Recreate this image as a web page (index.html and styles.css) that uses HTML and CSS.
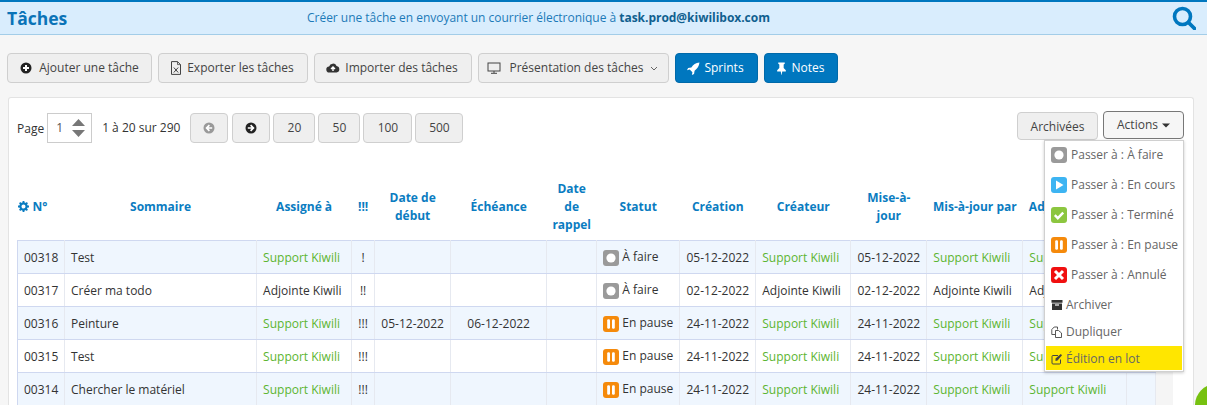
FILE: index.html
```html
<!DOCTYPE html>
<html lang="fr">
<head>
<meta charset="utf-8">
<title>Tâches</title>
<link rel="stylesheet" href="styles.css">
</head>
<body>
<svg class="sprites" width="0" height="0">
  <symbol id="i-plus" viewBox="0 0 12 12"><circle cx="6" cy="6" r="5.5" fill="currentColor"/><path d="M6 3v6M3 6h6" stroke="#fff" stroke-width="2"/></symbol>
  <symbol id="i-next" viewBox="0 0 12 12"><circle cx="6" cy="6" r="5.5" fill="currentColor"/><path d="M2.8 6h5M5.6 3.2 8.4 6 5.6 8.8" fill="none" stroke="#fff" stroke-width="1.7"/></symbol>
  <symbol id="i-prev" viewBox="0 0 12 12"><circle cx="6" cy="6" r="5.5" fill="currentColor"/><path d="M9.2 6h-5M6.4 3.2 3.6 6l2.8 2.8" fill="none" stroke="#fff" stroke-width="1.7"/></symbol>
  <symbol id="s-todo" viewBox="0 0 16 16"><rect width="16" height="16" rx="3" fill="#9a9a9a"/><circle cx="8" cy="8" r="4.6" fill="#fff"/></symbol>
  <symbol id="s-run" viewBox="0 0 16 16"><rect width="16" height="16" rx="3" fill="#3db4f2"/><path d="M5 3.5 12.5 8 5 12.5z" fill="#fff"/></symbol>
  <symbol id="s-done" viewBox="0 0 16 16"><rect width="16" height="16" rx="3" fill="#8cc63f"/><path d="m3.8 8.2 3 3 5.4-5.6" fill="none" stroke="#fff" stroke-width="2.4"/></symbol>
  <symbol id="s-pause" viewBox="0 0 16 16"><rect width="16" height="16" rx="3" fill="#f58a0b"/><rect x="4.2" y="3.2" width="2.8" height="9.6" rx="1.2" fill="#fff"/><rect x="9" y="3.2" width="2.8" height="9.6" rx="1.2" fill="#fff"/></symbol>
  <symbol id="s-cancel" viewBox="0 0 16 16"><rect width="16" height="16" rx="3" fill="#f01010"/><path d="m4 4 8 8M12 4l-8 8" stroke="#fff" stroke-width="3"/></symbol>
</svg>

<header class="topbar">
  <h1 class="title">Tâches</h1>
  <p class="mailto">Créer une tâche en envoyant un courrier électronique à <b>task.prod@kiwilibox.com</b></p>
  <svg class="search" viewBox="0 0 24 24" width="24" height="24"><circle cx="10.5" cy="10.5" r="8" fill="none" stroke="#0077bf" stroke-width="3.6"/><path d="m16.5 16.5 6 6" stroke="#0077bf" stroke-width="3.8" stroke-linecap="round"/></svg>
</header>

<nav class="toolbar">
  <button class="btn w-add"><svg class="ic"><use href="#i-plus"/></svg><span class="gap">Ajouter une tâche</span></button>
  <button class="btn w-exp"><svg class="ic doc" viewBox="0 0 12 14"><path d="M1.500.6h6L10.500 3.600v9.800h-9z" fill="none" stroke="#444"/><path d="M7.500.6v3h3" fill="none" stroke="#444" stroke-width=".8"/><path d="m3.800 6.500 4.400 5M8.200 6.500l-4.400 5" stroke="#444"/></svg>Exporter les tâches</button>
  <button class="btn w-imp"><svg class="ic wide" viewBox="0 0 14 12"><path d="M3.500 10.500a3 3 0 0 1-.4-6A4 4 0 0 1 10.600 4a3.300 3.300 0 0 1 0 6.500z" fill="#333"/><path d="M7 9V5.500M5 7l2-2 2 2" fill="none" stroke="#fff" stroke-width="1.400"/></svg>Importer des tâches</button>
  <button class="btn w-pres"><svg class="ic wide" viewBox="0 0 14 12"><rect x="1" y="1" width="12" height="8" fill="none" stroke="#444"/><path d="M7 9v2M4 11.300h6" stroke="#444"/></svg><span class="gap-s">Présentation des tâches</span><svg class="chev" viewBox="0 0 8 5" width="8" height="5"><path d="m1 1 3 3 3-3" fill="none" stroke="#666"/></svg></button>
  <button class="btn primary w-spr"><svg class="ic big" viewBox="0 0 12 12"><path d="M11.500.5C8 .8 5.800 2.500 4 5L1 5.500 0 7.500 2.500 7l2.500 2.500-.5 2.500 2-1 .5-3C9.500 6.200 11.200 4 11.500.5z" fill="#fff"/></svg>Sprints</button>
  <button class="btn primary w-not"><svg class="ic big" viewBox="0 0 12 12"><path d="M3 .5h6v1.200l-1 .6v3.200L10 7.600v1.200H6.700L6 12.500l-.7-3.700H2V7.600l2-2.100V2.300l-1-.6z" fill="#fff"/></svg>Notes</button>
</nav>

<main class="card">
  <div class="pager">
    <div class="pager-left">
      <span class="lbl">Page</span>
      <div class="spin"><span>1</span><svg viewBox="0 0 13 18" width="13" height="18"><path d="M6.500 0 13 7H0zM6.500 18 13 11H0z" fill="#777"/></svg></div>
      <span class="count">1 à 20 sur 290</span>
      <button class="btn pg arrow off"><svg class="ic"><use href="#i-prev"/></svg></button>
      <button class="btn pg arrow next"><svg class="ic"><use href="#i-next"/></svg></button>
      <button class="btn pg n20">20</button>
      <button class="btn pg n20">50</button>
      <button class="btn pg n100">100</button>
      <button class="btn pg n500">500</button>
    </div>
    <div class="pager-right">
      <button class="btn arch">Archivées</button>
      <button class="btn actions">Actions<svg viewBox="0 0 8 5" width="8" height="5"><path d="M0 .5h8L4 4.500z" fill="#333"/></svg></button>
    </div>
  </div>

  <div class="menu">
    <a class="mi"><svg class="si"><use href="#s-todo"/></svg>Passer à : À faire</a>
    <a class="mi"><svg class="si"><use href="#s-run"/></svg>Passer à : En cours</a>
    <a class="mi"><svg class="si"><use href="#s-done"/></svg>Passer à : Terminé</a>
    <a class="mi"><svg class="si"><use href="#s-pause"/></svg>Passer à : En pause</a>
    <a class="mi"><svg class="si"><use href="#s-cancel"/></svg>Passer à : Annulé</a>
    <a class="mi plain p1"><svg class="mic" viewBox="0 0 12 12"><path d="M.5 1h11v2.800H.5zM1 4.500h10V11H1z" fill="#333"/><path d="M4 6h4" stroke="#fff" stroke-width="1.200"/></svg>Archiver</a>
    <a class="mi plain p2"><svg class="mic" viewBox="0 0 12 12"><path d="M.8 3.500 3.200 1H6.500v2.500M.8 3.500V8.500h3.200M4.500 4.500h3l3 2.500v4.500h-6z" fill="none" stroke="#444" stroke-width=".9"/></svg>Dupliquer</a>
    <a class="mi plain hl"><svg class="mic" viewBox="0 0 12 12"><path d="M9.500 6.500V10a1 1 0 0 1-1 1H2a1 1 0 0 1-1-1V3.500a1 1 0 0 1 1-1h5" fill="none" stroke="#444"/><path d="M4.500 5.500 9.800 1 11 2.200 6.500 7.500l-2 .5z" fill="#444"/></svg>Édition en lot</a>
  </div>

  <table class="tasks">
    <colgroup>
      <col class="c47"><col class="c192"><col class="c95"><col class="c23"><col class="c76"><col class="c96"><col class="c50"><col class="c83"><col class="c76"><col class="c95"><col class="c76"><col class="c96"><col class="c104"><col class="c29"><col class="c17">
    </colgroup>
    <thead>
      <tr>
        <th class="first"><svg class="gear" viewBox="0 0 12 12" width="11" height="11"><circle cx="6" cy="6" r="3.400" fill="none" stroke="#0a7cc1" stroke-width="2.400"/><path d="M6 0v2.500M6 9.500V12M0 6h2.500M9.500 6H12M1.800 1.800l1.800 1.800M8.400 8.400l1.800 1.800M1.800 10.200l1.800-1.800M8.400 3.600l1.800-1.800" stroke="#0a7cc1" stroke-width="2"/></svg> N°</th>
        <th>Sommaire</th><th>Assigné à</th><th>!!!</th><th>Date de début</th><th>Échéance</th><th>Date de rappel</th><th>Statut</th><th>Création</th><th>Créateur</th><th class="narrow">Mise-à-jour</th><th class="nowrap">Mis-à-jour par</th><th class="left">Adjoint</th><th></th><th></th>
      </tr>
    </thead>
    <tbody>
      <tr class="alt"><td>00318</td><td>Test</td><td class="ok">Support Kiwili</td><td class="c">!</td><td></td><td></td><td></td><td class="st"><svg class="si"><use href="#s-todo"/></svg> À faire</td><td class="c">05-12-2022</td><td class="ok">Support Kiwili</td><td class="c">05-12-2022</td><td class="ok">Support Kiwili</td><td class="ok">Support Kiwili</td><td></td><td class="band"></td></tr>
      <tr><td>00317</td><td>Créer ma todo</td><td>Adjointe Kiwili</td><td class="c">!!</td><td></td><td></td><td></td><td class="st"><svg class="si"><use href="#s-todo"/></svg> À faire</td><td class="c">02-12-2022</td><td>Adjointe Kiwili</td><td class="c">02-12-2022</td><td>Adjointe Kiwili</td><td>Adjointe Kiwili</td><td></td><td class="band"></td></tr>
      <tr class="alt"><td>00316</td><td>Peinture</td><td class="ok">Support Kiwili</td><td class="c">!!!</td><td class="c">05-12-2022</td><td class="c">06-12-2022</td><td></td><td class="st"><svg class="si"><use href="#s-pause"/></svg> En pause</td><td class="c">24-11-2022</td><td class="ok">Support Kiwili</td><td class="c">24-11-2022</td><td class="ok">Support Kiwili</td><td class="ok">Support Kiwili</td><td></td><td class="band"></td></tr>
      <tr><td>00315</td><td>Test</td><td class="ok">Support Kiwili</td><td class="c">!!!</td><td></td><td></td><td></td><td class="st"><svg class="si"><use href="#s-pause"/></svg> En pause</td><td class="c">24-11-2022</td><td class="ok">Support Kiwili</td><td class="c">24-11-2022</td><td class="ok">Support Kiwili</td><td class="ok">Support Kiwili</td><td></td><td class="band"></td></tr>
      <tr class="alt"><td>00314</td><td>Chercher le matériel</td><td class="ok">Support Kiwili</td><td class="c">!!!</td><td></td><td></td><td></td><td class="st"><svg class="si"><use href="#s-pause"/></svg> En pause</td><td class="c">24-11-2022</td><td class="ok">Support Kiwili</td><td class="c">24-11-2022</td><td class="ok">Support Kiwili</td><td class="ok">Support Kiwili</td><td></td><td class="band"></td></tr>
    </tbody>
  </table>
</main>
<div class="fab"></div>
</body>
</html>
```
FILE: styles.css
```css
* { box-sizing: border-box; }
html { height: 405px; overflow: hidden; }
body {
  margin: 0;
  height: 405px;
  overflow: hidden;
  background: #f6f6f6;
  font: 12px/16px "Open Sans", "Noto Sans", sans-serif;
  color: #333;
  position: relative;
}
.sprites { position: absolute; }
.topbar {
  height: 35px;
  display: flex;
  align-items: center;
  background: #d9edfd;
  border-top: 2px solid #0077bf;
  border-bottom: 1px solid #a3cde8;
  padding: 0 11px 0 7px;
}
.title { margin: 0; width: 300px; font-size: 17.5px; font-weight: 700; color: #0a73b7; }
.mailto { margin: 0; flex: 1; color: #1c7ab8; letter-spacing: -.024px; }
.mailto b { color: #10608f; }
.search { display: block; }
.toolbar { display: flex; gap: 6px; padding: 18px 0 0 7px; }
.btn {
  height: 30px;
  padding: 0;
  display: inline-flex;
  align-items: center;
  justify-content: center;
  background: #efefef;
  border: 1px solid #cfcfcf;
  border-radius: 4px;
  font: inherit;
  color: #444;
}
.ic { width: 12px; height: 12px; margin-right: 5px; flex: none; color: #222; }
.ic.wide { width: 14px; }
.ic.doc { height: 14px; }
.ic.big { width: 13px; height: 13px; margin-right: 4px; }
.gap { margin-left: 2px; }
.gap-s { margin-left: 3px; }
.chev { margin-left: 6px; }
.w-add { width: 145px; }
.w-exp { width: 150px; padding-right: 2px; }
.w-imp { width: 158px; padding-right: 2px; }
.w-pres { width: 191px; padding-right: 2px; }
.w-spr { width: 83px; padding-right: 2px; }
.w-not { width: 74px; padding-right: 3px; }
.primary { background: #0077bf; border-color: #0069a9; color: #fff; }
.card {
  position: relative;
  margin: 14px 13px 0 8px;
  height: 340px;
  padding: 14px 0 0 8px;
  background: #fff;
  border: 1px solid #e3e3e3;
  border-bottom: 0;
  border-radius: 3px 3px 0 0;
}
.pager { display: flex; justify-content: space-between; align-items: flex-start; padding-right: 9px; }
.pager-left { display: flex; align-items: center; }
.lbl { position: relative; top: 1px; }
.spin {
  width: 45px;
  height: 30px;
  margin-left: 3px;
  padding: 0 6px 0 8px;
  display: flex;
  align-items: center;
  justify-content: space-between;
  border: 1px solid #ccc;
  color: #555;
}
.count { margin: 0 10px 0 10px; }
.pg { height: 30px; margin-right: 3px; margin-top: 1px; }
.arrow { width: 38px; }
.off .ic { color: #999; }
.arrow .ic { margin: 0; }
.off { margin-right: 4px; }
.n20 { width: 42px; }
.n100 { width: 49px; }
.n500 { width: 48px; }
.pager-right { display: flex; gap: 5px; align-items: flex-start; }
.arch { width: 81px; height: 28px; padding-top: 2px; }
.actions { width: 81px; height: 28px; margin-top: -1px; border-color: #777; background: #f6f6f6; gap: 4px; }
.menu {
  position: absolute;
  top: 42px;
  left: 1035px;
  width: 140px;
  height: 232px;
  padding: 0 1px;
  background: #fff;
  border: 1px solid #d0d0d0;
  box-shadow: 0 1px 3px rgba(0,0,0,.2);
  z-index: 5;
  color: #666;
}
.mi { display: flex; align-items: center; height: 30px; padding: 0 0 2px 5px; white-space: nowrap; }
.mi .si { margin-right: 4px; flex: none; }
.p1 { height: 28px; padding-bottom: 0; }
.p2 { height: 26px; padding-bottom: 0; }
.hl { height: 24px; margin-top: 1px; padding: 1px 0 0 5px; background: #ffe600; }
.mic { width: 12px; height: 12px; margin-right: 3px; flex: none; }
.si { width: 16px; height: 16px; vertical-align: -4px; }
.tasks {
  margin-top: 28px;
  width: 1156px;
  table-layout: fixed;
  border-collapse: collapse;
}
.c47 { width: 47px; } .c192 { width: 192px; } .c95 { width: 95px; } .c23 { width: 23px; }
.c76 { width: 76px; } .c96 { width: 96px; } .c50 { width: 50px; } .c83 { width: 83px; }
.c104 { width: 104px; } .c29 { width: 29px; } .c17 { width: 17px; }
th {
  height: 69px;
  padding: 4px 3px 0;
  font-weight: 700;
  line-height: 18px;
  color: #0a7cc1;
  text-align: center;
}
th.first { padding: 4px 0 0; text-align: left; white-space: nowrap; }
th.narrow { padding: 4px 6px 0; }
.nowrap { white-space: nowrap; }
th.left { text-align: left; padding-left: 6px; white-space: nowrap; }
.gear { vertical-align: -1px; margin-right: 1px; }
td {
  height: 33px;
  padding: 2px 6px 0;
  border: 1px solid #e6e9f0;
  border-top: 1px solid #cfd8f0;
  border-bottom: 1px solid #cfd8f0;
  white-space: nowrap;
  overflow: hidden;
  color: #333;
}
td:first-child { border-left-color: #cfd8f0; }
.alt td { background: #eff6fe; }
td.ok { color: #5cb531; }
td.c { text-align: center; padding: 2px 0 0; }
td.st { padding-top: 1px; }
td.st .si { vertical-align: -5px; }
td.band, .alt td.band { background: #f5f5f5; border-top: 0; border-bottom: 0; border-right: 0; }
.fab {
  position: absolute;
  left: 1195px;
  top: 384px;
  width: 42px;
  height: 42px;
  border-radius: 50%;
  background: #76c110;
}
```
